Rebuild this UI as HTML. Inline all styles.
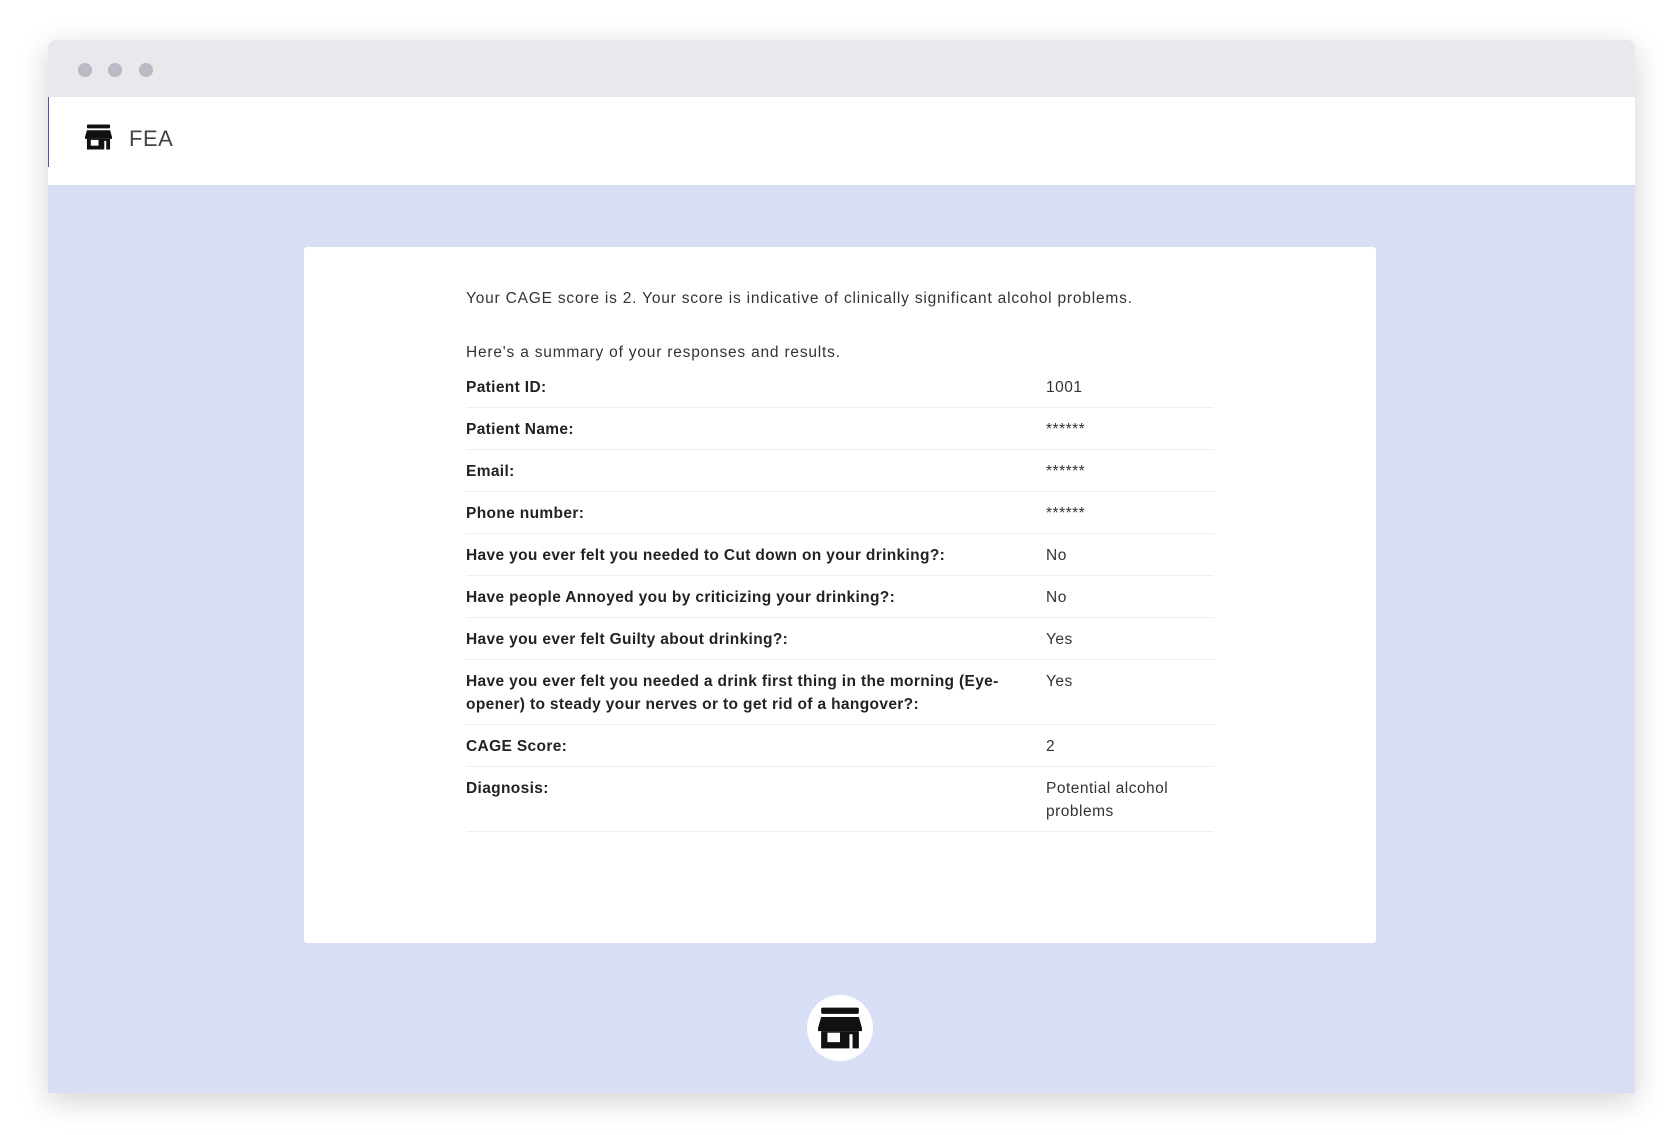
<!DOCTYPE html>
<html><head><meta charset="utf-8">
<style>
*{margin:0;padding:0;box-sizing:border-box}
body{width:1672px;height:1135px;background:#fff;font-family:"Liberation Sans",sans-serif;position:relative;overflow:hidden}
.win{position:absolute;left:48px;top:40px;width:1587px;height:1053px;border-radius:8px 8px 0 0;overflow:hidden;background:#d8def3;box-shadow:0 8px 30px rgba(0,0,0,.18)}
.tb{position:absolute;left:0;top:0;right:0;height:57px;background:#e8e9ed}
.dot{position:absolute;top:23px;width:14px;height:14px;border-radius:50%;background:#b9bac3}
.hdr{position:absolute;left:0;top:57px;right:0;height:88px;background:#fff}
.hdr .bl{position:absolute;left:0;top:0;width:1px;height:70px;background:#5a4fb0}
.hdr .t{position:absolute;left:81px;top:29px;font-size:22px;color:#444;letter-spacing:.5px}
.card{position:absolute;left:256px;top:207px;width:1072px;height:696px;background:#fff;border-radius:3px}
.txt{position:absolute;left:418px;font-size:15.5px;color:#333;letter-spacing:.8px}
.tbl{position:absolute;left:418px;top:326px;width:748px}
.row{display:flex;padding:10px 0 8px;line-height:23px;border-bottom:1px solid #eceef2;font-size:15.5px;color:#222}
.row .l{width:580px;font-weight:bold;padding-right:30px;letter-spacing:.35px}
.row .v{flex:1;color:#333;letter-spacing:.5px}
.circ{position:absolute;width:66px;height:66px;border-radius:50%;background:#fff}
</style></head><body>
<div class="win">
<div class="tb"><div class="dot" style="left:30px"></div><div class="dot" style="left:60px"></div><div class="dot" style="left:91px"></div></div>
<div class="hdr">
<div class="bl"></div>
<svg style="position:absolute;left:37px;top:27px" width="27" height="26" viewBox="0 0 28 26"><rect x="2" y="0" width="24" height="4" rx="1" fill="#111"/><path d="M2 6h24l2 7v2H0v-2z" fill="#111"/><path d="M2 15h24v11h-4v-9h-2v9H2z" fill="#111"/><rect x="6" y="16" width="8" height="6" fill="#fff"/></svg>
<div class="t">FEA</div>
</div>
<div class="card"></div>
<div class="txt" style="top:250px">Your CAGE score is 2. Your score is indicative of clinically significant alcohol problems.</div>
<div class="txt" style="top:304px">Here's a summary of your responses and results.</div>
<div class="tbl">
<div class="row"><div class="l">Patient ID:</div><div class="v">1001</div></div>
<div class="row"><div class="l">Patient Name:</div><div class="v">******</div></div>
<div class="row"><div class="l">Email:</div><div class="v">******</div></div>
<div class="row"><div class="l">Phone number:</div><div class="v">******</div></div>
<div class="row"><div class="l">Have you ever felt you needed to Cut down on your drinking?:</div><div class="v">No</div></div>
<div class="row"><div class="l">Have people Annoyed you by criticizing your drinking?:</div><div class="v">No</div></div>
<div class="row"><div class="l">Have you ever felt Guilty about drinking?:</div><div class="v">Yes</div></div>
<div class="row"><div class="l">Have you ever felt you needed a drink first thing in the morning (Eye-opener) to steady your nerves or to get rid of a hangover?:</div><div class="v">Yes</div></div>
<div class="row"><div class="l">CAGE Score:</div><div class="v">2</div></div>
<div class="row"><div class="l">Diagnosis:</div><div class="v">Potential alcohol<br>problems</div></div>
</div>
<div class="circ" style="left:759px;top:955px">
<svg style="position:absolute;left:11px;top:12px" width="44" height="42" viewBox="0 0 28 26"><rect x="2" y="0" width="24" height="4" rx="1" fill="#111"/><path d="M2 6h24l2 7v2H0v-2z" fill="#111"/><path d="M2 15h24v11h-4v-9h-2v9H2z" fill="#111"/><rect x="6" y="16" width="8" height="6" fill="#fff"/></svg>
</div>
</div>
</body></html>
